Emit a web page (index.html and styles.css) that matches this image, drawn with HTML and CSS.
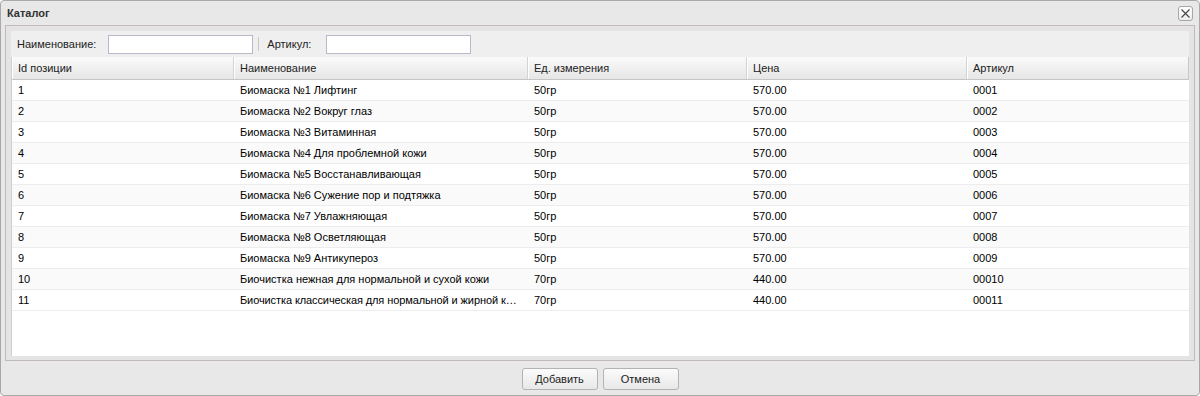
FILE: index.html
```html
<!DOCTYPE html>
<html lang="ru">
<head>
<meta charset="utf-8">
<title>Каталог</title>
<link rel="stylesheet" href="styles.css">
</head>
<body>
<div class="window">
  <div class="win-header">
    <span class="win-title">Каталог</span>
    <span class="win-close">
      <svg width="11" height="11" viewBox="0 0 11 11"><path d="M1.5 1.5 L9.5 9.5 M9.5 1.5 L1.5 9.5" stroke="#444" stroke-width="1.1" fill="none"/></svg>
    </span>
  </div>
  <div class="win-body">
    <div class="toolbar">
      <span class="tb-label">Наименование:</span>
      <input class="tb-input tb-input-name" type="text">
      <span class="tb-sep"></span>
      <span class="tb-label">Артикул:</span>
      <input class="tb-input tb-input-art" type="text">
    </div>
    <div class="grid">
      <div class="grid-head row">
        <div class="hcell">Id позиции</div>
        <div class="hcell">Наименование</div>
        <div class="hcell">Ед. измерения</div>
        <div class="hcell">Цена</div>
        <div class="hcell last">Артикул</div>
      </div>
      <div class="grid-body">
        <div class="row drow"><div class="cell">1</div><div class="cell">Биомаска №1 Лифтинг</div><div class="cell">50гр</div><div class="cell">570.00</div><div class="cell">0001</div></div>
        <div class="row drow alt"><div class="cell">2</div><div class="cell">Биомаска №2 Вокруг глаз</div><div class="cell">50гр</div><div class="cell">570.00</div><div class="cell">0002</div></div>
        <div class="row drow"><div class="cell">3</div><div class="cell">Биомаска №3 Витаминная</div><div class="cell">50гр</div><div class="cell">570.00</div><div class="cell">0003</div></div>
        <div class="row drow alt"><div class="cell">4</div><div class="cell">Биомаска №4 Для проблемной кожи</div><div class="cell">50гр</div><div class="cell">570.00</div><div class="cell">0004</div></div>
        <div class="row drow"><div class="cell">5</div><div class="cell">Биомаска №5 Восстанавливающая</div><div class="cell">50гр</div><div class="cell">570.00</div><div class="cell">0005</div></div>
        <div class="row drow alt"><div class="cell">6</div><div class="cell">Биомаска №6 Сужение пор и подтяжка</div><div class="cell">50гр</div><div class="cell">570.00</div><div class="cell">0006</div></div>
        <div class="row drow"><div class="cell">7</div><div class="cell">Биомаска №7 Увлажняющая</div><div class="cell">50гр</div><div class="cell">570.00</div><div class="cell">0007</div></div>
        <div class="row drow alt"><div class="cell">8</div><div class="cell">Биомаска №8 Осветляющая</div><div class="cell">50гр</div><div class="cell">570.00</div><div class="cell">0008</div></div>
        <div class="row drow"><div class="cell">9</div><div class="cell">Биомаска №9 Антикупероз</div><div class="cell">50гр</div><div class="cell">570.00</div><div class="cell">0009</div></div>
        <div class="row drow alt"><div class="cell">10</div><div class="cell">Биочистка нежная для нормальной и сухой кожи</div><div class="cell">70гр</div><div class="cell">440.00</div><div class="cell">00010</div></div>
        <div class="row drow"><div class="cell">11</div><div class="cell cell-tight">Биочистка классическая для нормальной и жирной кожи</div><div class="cell">70гр</div><div class="cell">440.00</div><div class="cell">00011</div></div>
      </div>
    </div>
  </div>
  <div class="win-footer">
    <button class="btn" type="button">Добавить</button>
    <button class="btn" type="button">Отмена</button>
  </div>
</div>
</body>
</html>
```

FILE: styles.css
```css
html, body {
  margin: 0;
  padding: 0;
  background: #ffffff;
}
body {
  font-family: "Liberation Sans", Arial, sans-serif;
  font-size: 11px;
  color: #000;
}
.window {
  box-sizing: border-box;
  width: 1200px;
  height: 396px;
  border: 1px solid #a9a9a9;
  border-radius: 4px;
  background: #e8e8e8;
  display: flex;
  flex-direction: column;
}
.win-header {
  height: 24px;
  display: flex;
  align-items: center;
  justify-content: space-between;
  padding: 0 6px 0 6px;
  flex: none;
}
.win-title {
  font-weight: bold;
  color: #333;
  font-size: 11px;
}
.win-close {
  box-sizing: border-box;
  width: 15px;
  height: 15px;
  border: 1px solid #a6a6a6;
  border-radius: 3px;
  background: linear-gradient(#ffffff, #ececec);
  display: flex;
  align-items: center;
  justify-content: center;
}
.win-body {
  flex: 1;
  margin: 0 4px;
  border: 1px solid #c2baba;
  padding: 5px 5px 4px 5px;
  display: flex;
  flex-direction: column;
  background: #e4e4e4;
  min-height: 0;
}
.toolbar {
  height: 26px;
  flex: none;
  background: #efefef;
  display: flex;
  align-items: center;
  padding: 0 6px;
}
.tb-label {
  color: #222;
}
.tb-input {
  box-sizing: border-box;
  height: 19px;
  border: 1px solid #b8b9c9;
  background: #fff;
  padding: 0 3px;
  margin: 0;
  font: inherit;
}
.tb-input-name {
  width: 145px;
  margin-left: 12px;
}
.tb-input-art {
  width: 145px;
  margin-left: 15px;
}
.tb-sep {
  width: 1px;
  height: 14px;
  background: #c8c8c8;
  margin: 0 8px 0 5px;
}
.grid {
  flex: 1;
  display: flex;
  flex-direction: column;
  background: #fff;
  border-left: 1px solid #d0d0d0;
  min-height: 0;
}
.row {
  display: grid;
  grid-template-columns: 222px 294px 219px 220px 1fr;
}
.grid-head {
  height: 22px;
  border-bottom: 1px solid #c5c5c5;
  background: linear-gradient(#fafafa, #e6e6e6);
  flex: none;
}
.hcell {
  padding: 0 6px;
  line-height: 22px;
  color: #222;
  border-right: 1px solid #d3d3d3;
  box-shadow: inset 1px 0 0 #ffffff;
  white-space: nowrap;
  overflow: hidden;
}
.hcell.last {
  border-right: 1px solid #c8c8c8;
}
.grid-body {
  flex: 1;
}
.drow {
  height: 20px;
  border-bottom: 1px solid #ededed;
}
.drow.alt {
  background: #fafafa;
}
.cell {
  padding: 0 6px;
  line-height: 20px;
  white-space: nowrap;
  overflow: hidden;
  text-overflow: ellipsis;
  color: #000;
}
.cell-tight {
  letter-spacing: -0.1px;
}
.win-footer {
  height: 34px;
  flex: none;
  display: flex;
  justify-content: center;
  align-items: flex-start;
  padding-top: 7px;
  box-sizing: border-box;
  gap: 5px;
}
.btn {
  box-sizing: border-box;
  width: 76px;
  height: 22px;
  border: 1px solid #b3b3b3;
  border-radius: 3px;
  background: linear-gradient(#fbfbfb, #e8e8e8);
  font: inherit;
  color: #222;
  padding: 0;
}
```
